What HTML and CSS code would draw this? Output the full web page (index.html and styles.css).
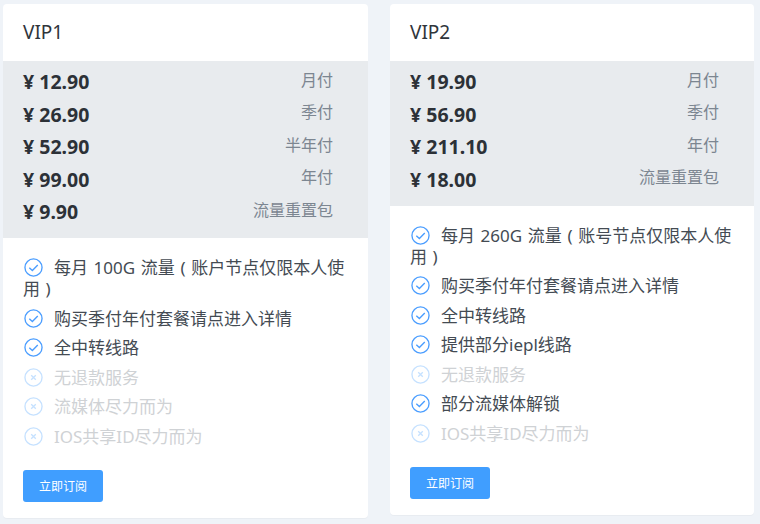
FILE: index.html
```html
<!DOCTYPE html>
<html lang="zh">
<head>
<meta charset="utf-8">
<title>VIP</title>
<link rel="stylesheet" href="styles.css">
</head>
<body>
<svg class="defs" width="0" height="0" aria-hidden="true">
  <symbol id="ok" viewBox="0 0 20 20"><circle cx="10" cy="10" r="9" fill="none" stroke="currentColor" stroke-width="1.4"/><path d="M5.6 10.2l3.2 3 5.7-5.9" fill="none" stroke="currentColor" stroke-width="1.4"/></symbol>
  <symbol id="no" viewBox="0 0 20 20"><circle cx="10" cy="10" r="9" fill="none" stroke="currentColor" stroke-width="1.4"/><path d="M7.6 7.6l4.8 4.8M12.4 7.6l-4.8 4.8" fill="none" stroke="currentColor" stroke-width="1.4"/></symbol>
</svg>
<main class="plans">
  <section class="card">
    <h2 class="title">VIP1</h2>
    <div class="prices">
      <div class="row"><b>¥ 12.90</b><span>月付</span></div>
      <div class="row"><b>¥ 26.90</b><span>季付</span></div>
      <div class="row"><b>¥ 52.90</b><span>半年付</span></div>
      <div class="row"><b>¥ 99.00</b><span>年付</span></div>
      <div class="row"><b>¥ 9.90</b><span>流量重置包</span></div>
    </div>
    <div class="body">
      <ul class="features">
        <li><svg class="ic"><use href="#ok"/></svg>每月 100G 流量 ( 账户节点仅限本人使用 )</li>
        <li><svg class="ic"><use href="#ok"/></svg>购买季付年付套餐请点进入详情</li>
        <li><svg class="ic"><use href="#ok"/></svg>全中转线路</li>
        <li class="off"><svg class="ic"><use href="#no"/></svg>无退款服务</li>
        <li class="off"><svg class="ic"><use href="#no"/></svg>流媒体尽力而为</li>
        <li class="off"><svg class="ic"><use href="#no"/></svg>IOS共享ID尽力而为</li>
      </ul>
      <button class="btn" type="button">立即订阅</button>
    </div>
  </section>
  <section class="card">
    <h2 class="title">VIP2</h2>
    <div class="prices">
      <div class="row"><b>¥ 19.90</b><span>月付</span></div>
      <div class="row"><b>¥ 56.90</b><span>季付</span></div>
      <div class="row"><b>¥ 211.10</b><span>年付</span></div>
      <div class="row"><b>¥ 18.00</b><span>流量重置包</span></div>
    </div>
    <div class="body">
      <ul class="features">
        <li><svg class="ic"><use href="#ok"/></svg>每月 260G 流量 ( 账号节点仅限本人使用 )</li>
        <li><svg class="ic"><use href="#ok"/></svg>购买季付年付套餐请点进入详情</li>
        <li><svg class="ic"><use href="#ok"/></svg>全中转线路</li>
        <li><svg class="ic"><use href="#ok"/></svg>提供部分iepl线路</li>
        <li class="off"><svg class="ic"><use href="#no"/></svg>无退款服务</li>
        <li><svg class="ic"><use href="#ok"/></svg>部分流媒体解锁</li>
        <li class="off"><svg class="ic"><use href="#no"/></svg>IOS共享ID尽力而为</li>
      </ul>
      <button class="btn" type="button">立即订阅</button>
    </div>
  </section>
</main>
</body>
</html>
```
FILE: styles.css
```css
* { box-sizing: border-box; }
html, body { margin: 0; height: 100%; overflow: hidden; }
body {
  background: #eff3f8;
  font-family: "Noto Sans", "Noto Sans CJK SC", sans-serif;
  color: #444b53;
}
.defs { position: absolute; }
.plans {
  display: grid;
  grid-template-columns: 365px 364px;
  column-gap: 22px;
  align-items: start;
  padding: 4px 0 0 3px;
}
.card {
  background: #fff;
  border-radius: 4px;
  box-shadow: 0 1px 1px rgba(0, 0, 0, .03);
  overflow: hidden;
}
.title {
  margin: 0;
  height: 57px;
  padding: 0 20px;
  font-size: 19px;
  font-weight: 400;
  line-height: 57px;
  color: #2f353b;
}
.prices {
  background: #e8ebee;
  padding: 4.5px 35px 10px 20px;
}
.row {
  display: flex;
  justify-content: space-between;
  height: 32.5px;
  align-items: center;
}
.row b {
  font-size: 19.5px;
  font-weight: 700;
  color: #2c3137;
  line-height: 1;
}
.row span {
  font-size: 16px;
  color: #7c8691;
  position: relative;
  top: -2px;
  line-height: 1;
}
.body { padding: 19px 20px 16px; }
.features {
  list-style: none;
  margin: 0 0 23px;
  padding: 0;
  font-size: 17px;
  line-height: 21px;
  word-spacing: 1.2px;
}
.features li { margin-bottom: 8.5px; }
.features li:last-child { margin-bottom: 0; }
.ic {
  width: 19px;
  height: 19px;
  margin: -6px 11px -6px 1px;
  color: #4a9dff;
  vertical-align: 3px;
}
.off { color: #cfd2d5; }
.off .ic { color: #c5e1ff; }
.btn {
  display: block;
  width: 80px;
  height: 32px;
  border: 0;
  border-radius: 3px;
  background: #409eff;
  color: #fff;
  font: 12px/32px "Noto Sans CJK SC", sans-serif;
  padding: 0;
}
```
